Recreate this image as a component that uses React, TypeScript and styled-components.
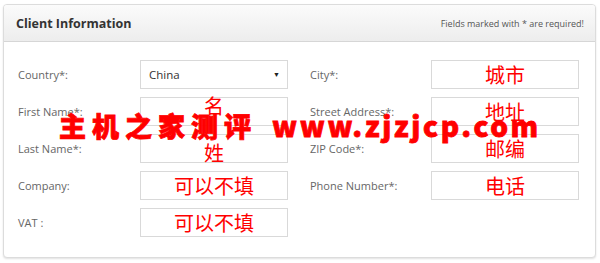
import React from 'react'
import { styled, createGlobalStyle } from 'styled-components'

const GlobalStyle = createGlobalStyle`
  html, body {
    margin: 0;
    padding: 0;
    background: #fff;
    font-family: "Open Sans", "Noto Sans", sans-serif;
  }
`

type Field = { label: string; value?: string; select?: boolean; valueShift?: number }

const leftFields: Field[] = [
  { label: 'Country*:', value: 'China', select: true },
  { label: 'First Name*:', value: '名', valueShift: -6 },
  { label: 'Last Name*:', value: '姓', valueShift: 4 },
  { label: 'Company:', value: '可以不填' },
  { label: 'VAT :', value: '可以不填' },
]

const rightFields: Field[] = [
  { label: 'City*:', value: '城市' },
  { label: 'Street Address*:', value: '地址' },
  { label: 'ZIP Code*:', value: '邮编' },
  { label: 'Phone Number*:', value: '电话' },
]

const FieldRow = ({ field }: { field: Field }) => (
  <Row>
    <Label>{field.label}</Label>
    {field.select ? (
      <SelectBox>
        <span>{field.value}</span>
        <Caret>▼</Caret>
      </SelectBox>
    ) : (
      <InputBox>
        <CjkValue $shift={field.valueShift ?? 0}>{field.value}</CjkValue>
      </InputBox>
    )}
  </Row>
)

const App = () => (
  <>
    <GlobalStyle />
    <Page>
      <Panel>
        <Header>
          <Title>Client Information</Title>
          <Note>Fields marked with * are required!</Note>
        </Header>
        <Body>
          <Column $labelWidth={122}>
            {leftFields.map((f) => <FieldRow key={f.label} field={f} />)}
          </Column>
          <Column $labelWidth={121}>
            {rightFields.map((f) => <FieldRow key={f.label} field={f} />)}
          </Column>
        </Body>
        <Watermark>
          <WmCjk>主机之家测评</WmCjk>
          <WmLatin>www.zjzjcp.com</WmLatin>
        </Watermark>
      </Panel>
    </Page>
  </>
)

export default App

const Page = styled.div`
  width: 600px;
  height: 263px;
  padding: 4px 4px 0 3px;
  box-sizing: border-box;
`

const Panel = styled.div`
  position: relative;
  width: 593px;
  height: 254px;
  box-sizing: border-box;
  border: 1px solid #dcdcdc;
  border-radius: 4px;
  box-shadow: 0 1px 2px rgba(0, 0, 0, 0.12);
  background: #fff;
  overflow: hidden;
`

const Header = styled.div`
  height: 37px;
  box-sizing: border-box;
  display: flex;
  align-items: center;
  justify-content: space-between;
  padding: 0 11px 0 12px;
  background: linear-gradient(to bottom, #fbfbfb, #ededed);
  border-bottom: 1px solid #d6d6d6;
`

const Title = styled.div`
  font-size: 12.5px;
  font-weight: 700;
  color: #333;
`

const Note = styled.div`
  font-size: 9px;
  color: #555;
`

const Body = styled.div`
  display: grid;
  grid-template-columns: 292px 290px;
  padding: 18px 0 0 14px;
`

const Column = styled.div<{ $labelWidth: number }>`
  display: flex;
  flex-direction: column;
  gap: 8px;
  --label-w: ${({ $labelWidth }) => $labelWidth}px;
`

const Row = styled.div`
  display: flex;
  align-items: center;
  height: 29px;
`

const Label = styled.div`
  width: var(--label-w);
  font-size: 11px;
  color: #666;
`

const BoxBase = styled.div`
  width: 148px;
  height: 29px;
  box-sizing: border-box;
  border: 1px solid #d9d9d9;
  background: #fff;
  display: flex;
  align-items: center;
`

const SelectBox = styled(BoxBase)`
  justify-content: space-between;
  padding: 0 7px 0 8px;
  font-size: 11.5px;
  color: #333;
`

const Caret = styled.span`
  font-size: 7px;
  color: #222;
`

const InputBox = styled(BoxBase)`
  justify-content: center;
`

const CjkValue = styled.span<{ $shift: number }>`
  font-family: "Noto Sans CJK SC", sans-serif;
  font-size: 20px;
  line-height: 1;
  color: #f00;
  transform: translateY(${({ $shift }) => $shift}px);
`

const Watermark = styled.div`
  position: absolute;
  left: 55px;
  top: 100px;
  display: flex;
  align-items: baseline;
  gap: 15px;
  color: #f00;
  font-family: "Noto Sans CJK SC", sans-serif;
  font-weight: 900;
  -webkit-text-stroke: 0.8px #f00;
  pointer-events: none;
`

const WmCjk = styled.span`
  font-size: 27px;
  letter-spacing: 6px;
`

const WmLatin = styled.span`
  font-size: 28px;
  letter-spacing: 2.6px;
`
